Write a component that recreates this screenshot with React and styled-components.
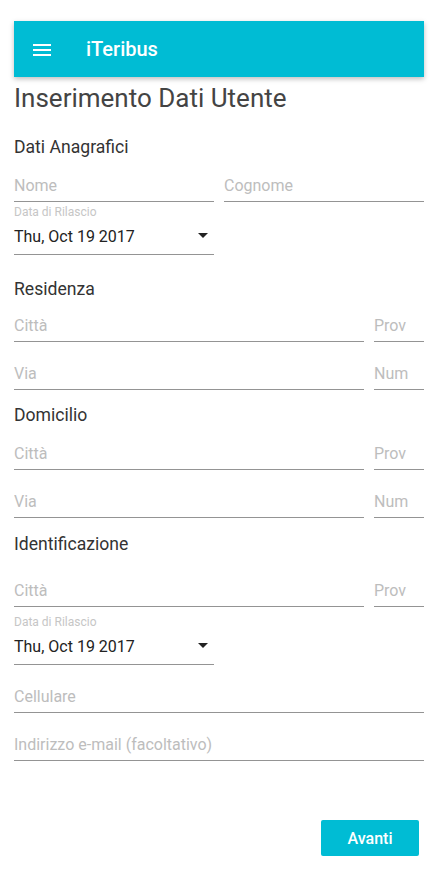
import React from "react";
import styled, { createGlobalStyle } from "styled-components";

const GlobalStyle = createGlobalStyle`
  * { box-sizing: border-box; }
  body {
    margin: 0;
    background: #fff;
    font-family: Roboto, "Noto Sans", sans-serif;
  }
`;

const Page = styled.div`
  padding: 21px 16px 0 14px;
  width: 440px;
`;

const Toolbar = styled.header`
  display: flex;
  align-items: center;
  height: 56px;
  padding: 0 16px;
  background-color: #00bcd4;
  box-shadow: 0 2px 5px rgba(0, 0, 0, 0.26);
`;

const MenuIcon = styled.svg`
  display: block;
  width: 24px;
  height: 24px;
  fill: #fff;
  margin-top: 2px;
`;

const Brand = styled.span`
  margin-left: 32px;
  color: #fff;
  font-size: 20px;
  font-weight: 500;
`;

const Title = styled.h1`
  margin: 6px 0 0;
  font-size: 26px;
  line-height: 30px;
  font-weight: 400;
  color: #444;
`;

const SectionTitle = styled.h2`
  margin: ${(p) => p.$mt}px 0 0;
  font-size: 17.6px;
  line-height: 18px;
  font-weight: 400;
  color: #333;
`;

const Row = styled.div`
  display: grid;
  grid-template-columns: ${(p) => p.$cols};
  column-gap: 10px;
  margin-top: ${(p) => p.$mt}px;
`;

const Field = styled.label`
  display: flex;
  align-items: flex-end;
  height: 44px;
  padding-bottom: 5px;
  border-bottom: 1px solid #949494;
`;

const Input = styled.input`
  width: 100%;
  height: 20px;
  padding: 0;
  border: none;
  outline: none;
  background: transparent;
  font-family: inherit;
  font-size: 16px;
  line-height: 20px;
  color: #222;

  &::placeholder {
    color: #bdbdbd;
  }
`;

const DateField = styled.div`
  width: 200px;
  margin-top: ${(p) => p.$mt}px;
  padding-top: ${(p) => p.$pt}px;
  padding-bottom: 7px;
  border-bottom: 1px solid #949494;
`;

const SmallLabel = styled.div`
  font-size: 12px;
  line-height: 12px;
  color: #c6c6c6;
`;

const DateValue = styled.div`
  display: flex;
  align-items: center;
  justify-content: space-between;
  height: 20px;
  margin-top: 9px;
  font-size: 16px;
  line-height: 20px;
  color: #222;
`;

const Arrow = styled.svg`
  width: 24px;
  height: 24px;
  margin-top: -4px;
  margin-right: -1px;
  fill: #222;
`;

const Actions = styled.div`
  display: flex;
  justify-content: flex-end;
  margin-top: 59px;
  padding-right: 5px;
`;

const Button = styled.button`
  width: 98px;
  height: 36px;
  border: none;
  border-radius: 2px;
  background-color: #00bcd4;
  color: #fff;
  font-family: inherit;
  font-size: 16px;
  font-weight: 500;
  cursor: pointer;
`;

const TextInput = ({ placeholder }) => (
  <Field>
    <Input placeholder={placeholder} />
  </Field>
);

const DatePicker = ({ mt, pt }) => (
  <DateField $mt={mt} $pt={pt}>
    <SmallLabel>Data di Rilascio</SmallLabel>
    <DateValue>
      <span>Thu, Oct 19 2017</span>
      <Arrow viewBox="0 0 24 24">
        <path d="M7 10l5 5 5-5z" />
      </Arrow>
    </DateValue>
  </DateField>
);

const CityRow = ({ mt }) => (
  <Row $cols="1fr 50px" $mt={mt}>
    <TextInput placeholder="Città" />
    <TextInput placeholder="Prov" />
  </Row>
);

const StreetRow = ({ mt }) => (
  <Row $cols="1fr 50px" $mt={mt}>
    <TextInput placeholder="Via" />
    <TextInput placeholder="Num" />
  </Row>
);

export default function App() {
  return (
    <Page>
      <GlobalStyle />
      <Toolbar>
        <MenuIcon viewBox="0 0 24 24">
          <path d="M3 18h18v-2H3v2zm0-5h18v-2H3v2zm0-7v2h18V6H3z" />
        </MenuIcon>
        <Brand>iTeribus</Brand>
      </Toolbar>

      <Title>Inserimento Dati Utente</Title>

      <SectionTitle $mt={25}>Dati Anagrafici</SectionTitle>
      <Row $cols="1fr 1fr" $mt={2}>
        <TextInput placeholder="Nome" />
        <TextInput placeholder="Cognome" />
      </Row>
      <DatePicker mt={4} pt={0} />

      <SectionTitle $mt={25}>Residenza</SectionTitle>
      <CityRow mt={0} />
      <StreetRow mt={4} />

      <SectionTitle $mt={16}>Domicilio</SectionTitle>
      <CityRow mt={2} />
      <StreetRow mt={4} />

      <SectionTitle $mt={17}>Identificazione</SectionTitle>
      <CityRow mt={10} />
      <DatePicker mt={4} pt={5} />
      <Row $cols="1fr" $mt={4}>
        <TextInput placeholder="Cellulare" />
      </Row>
      <Row $cols="1fr" $mt={4}>
        <TextInput placeholder="Indirizzo e-mail (facoltativo)" />
      </Row>

      <Actions>
        <Button>Avanti</Button>
      </Actions>
    </Page>
  );
}
